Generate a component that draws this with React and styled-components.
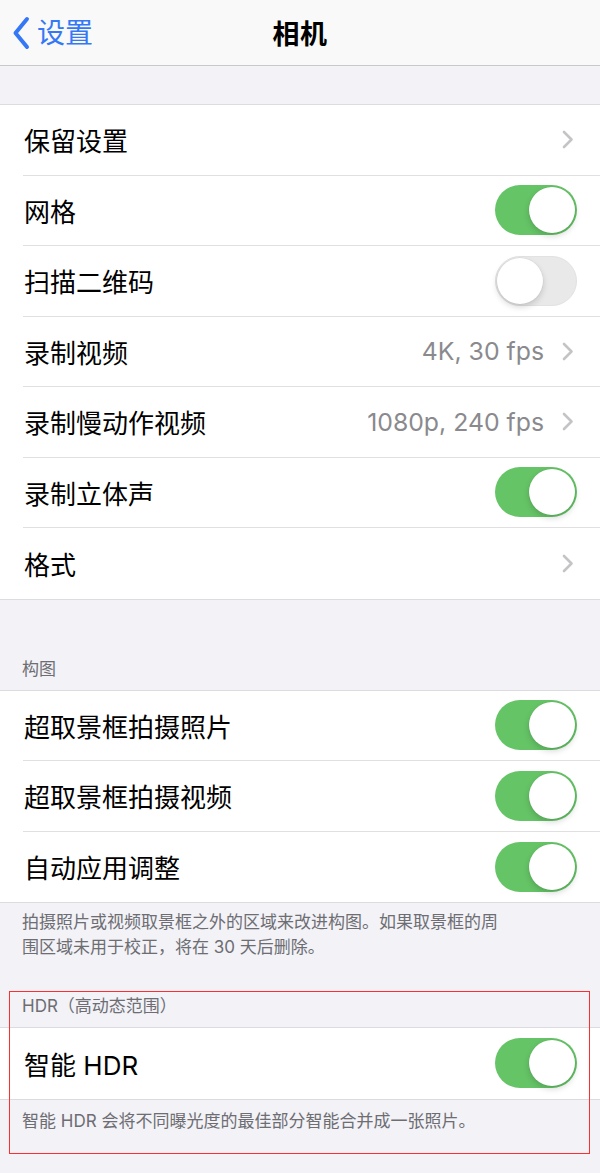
import React from "react";
import styled, { createGlobalStyle } from "styled-components";

const Global = createGlobalStyle`
  html, body { margin: 0; padding: 0; background: #f2f2f7; }
  body {
    font-family: "Inter", "Noto Sans CJK SC", "Noto Sans", sans-serif;
    -webkit-font-smoothing: antialiased;
  }
`;

const Page = styled.div`
  width: 600px;
  min-height: 1173px;
  background: #f2f2f7;
  display: flex;
  flex-direction: column;
`;

const NavBar = styled.header`
  height: 65px;
  background: #f9f9f9;
  border-bottom: 1px solid #c9c9cc;
  display: grid;
  grid-template-columns: 1fr auto 1fr;
  align-items: center;
  padding: 0 12px;
`;

const BackButton = styled.div`
  display: flex;
  align-items: center;
  gap: 7px;
  color: #3478f6;
  font-size: 28px;
  line-height: 1;
`;

const Title = styled.div`
  font-size: 27px;
  font-weight: 700;
  color: #000;
  letter-spacing: 0.5px;
`;

const Gap = styled.div`
  height: ${(p) => p.$h}px;
`;

const Group = styled.section`
  background: #fff;
  border-top: 1px solid #dcdce0;
  border-bottom: 1px solid #dcdce0;
`;

const Row = styled.div`
  height: ${(p) => p.$h || 70.5}px;
  box-sizing: border-box;
  margin-left: 23px;
  padding-right: 23px;
  display: flex;
  align-items: center;
  border-bottom: ${(p) => (p.$last ? "none" : "1px solid #e0e0e3")};
`;

const Label = styled.div`
  flex: 1;
  font-size: 26px;
  color: #000;
  padding-left: 1px;
`;

const Value = styled.div`
  font-size: 24.8px;
  color: #8a8a8e;
  margin-right: 18px;
`;

const Chevron = styled.svg`
  width: 12px;
  height: 19px;
  margin-right: 3px;
  display: block;
`;

const Track = styled.div`
  width: 82px;
  height: 50px;
  box-sizing: border-box;
  border-radius: 25px;
  position: relative;
  background: ${(p) => (p.$on ? "#65c466" : "#e9e9ea")};
  border: ${(p) => (p.$on ? "none" : "1px solid #e2e2e4")};
`;

const Knob = styled.div`
  position: absolute;
  top: ${(p) => (p.$on ? 2 : 1)}px;
  ${(p) => (p.$on ? "right: 2px;" : "left: 1px;")}
  width: 46px;
  height: 46px;
  border-radius: 50%;
  background: #fff;
  box-shadow: 0 3px 6px rgba(0, 0, 0, 0.16), 0 0 0 0.5px rgba(0, 0, 0, 0.06);
`;

const GroupHeader = styled.div`
  height: ${(p) => p.$h}px;
  box-sizing: border-box;
  display: flex;
  align-items: flex-end;
  padding: 0 22px 8px;
  font-size: 17px;
  line-height: 25px;
  color: #6d6d72;
`;

const GroupFooter = styled.div`
  padding: ${(p) => p.$pt}px 90px ${(p) => p.$pb}px 22px;
  font-size: 17px;
  line-height: 25px;
  color: #6d6d72;
`;

const Marked = styled.div`
  position: relative;
`;

const MarkBox = styled.div`
  position: absolute;
  left: 9px;
  top: 4px;
  width: 581px;
  height: 163px;
  box-sizing: border-box;
  border: 1px solid #ff2d2d;
  pointer-events: none;
`;

const Switch = ({ on }) => (
  <Track $on={on}>
    <Knob $on={on} />
  </Track>
);

const ChevronIcon = () => (
  <Chevron viewBox="0 0 12 19">
    <path d="M2 2 L9.5 9.5 L2 17" fill="none" stroke="#c4c4c7" strokeWidth="2.6" strokeLinecap="round" strokeLinejoin="round" />
  </Chevron>
);

const SettingRow = ({ label, value, toggle, on, last }) => (
  <Row $last={last}>
    <Label>{label}</Label>
    {value && <Value>{value}</Value>}
    {toggle ? <Switch on={on} /> : <ChevronIcon />}
  </Row>
);

export default function App() {
  return (
    <Page>
      <Global />
      <NavBar>
        <BackButton>
          <svg width="18" height="34" viewBox="0 0 18 34">
            <path d="M15 3 L3.5 17 L15 31" fill="none" stroke="#3478f6" strokeWidth="4" strokeLinecap="round" strokeLinejoin="round" />
          </svg>
          <span>设置</span>
        </BackButton>
        <Title>相机</Title>
        <div />
      </NavBar>
      <Gap $h={38} />
      <Group>
        <SettingRow label="保留设置" />
        <SettingRow label="网格" toggle on />
        <SettingRow label="扫描二维码" toggle on={false} />
        <SettingRow label="录制视频" value="4K, 30 fps" />
        <SettingRow label="录制慢动作视频" value="1080p, 240 fps" />
        <SettingRow label="录制立体声" toggle on />
        <SettingRow label="格式" last />
      </Group>
      <GroupHeader $h={90}>构图</GroupHeader>
      <Group>
        <SettingRow label="超取景框拍摄照片" toggle on />
        <SettingRow label="超取景框拍摄视频" toggle on />
        <SettingRow label="自动应用调整" toggle on last />
      </Group>
      <GroupFooter $pt={7} $pb={27}>
        拍摄照片或视频取景框之外的区域来改进构图。如果取景框的周围区域未用于校正，将在 30 天后删除。
      </GroupFooter>
      <Marked>
        <GroupHeader $h={40}>HDR（高动态范围）</GroupHeader>
        <Group>
          <SettingRow label="智能 HDR" toggle on last />
        </Group>
        <GroupFooter $pt={9} $pb={30}>
          智能 HDR 会将不同曝光度的最佳部分智能合并成一张照片。
        </GroupFooter>
        <MarkBox />
      </Marked>
    </Page>
  );
}
